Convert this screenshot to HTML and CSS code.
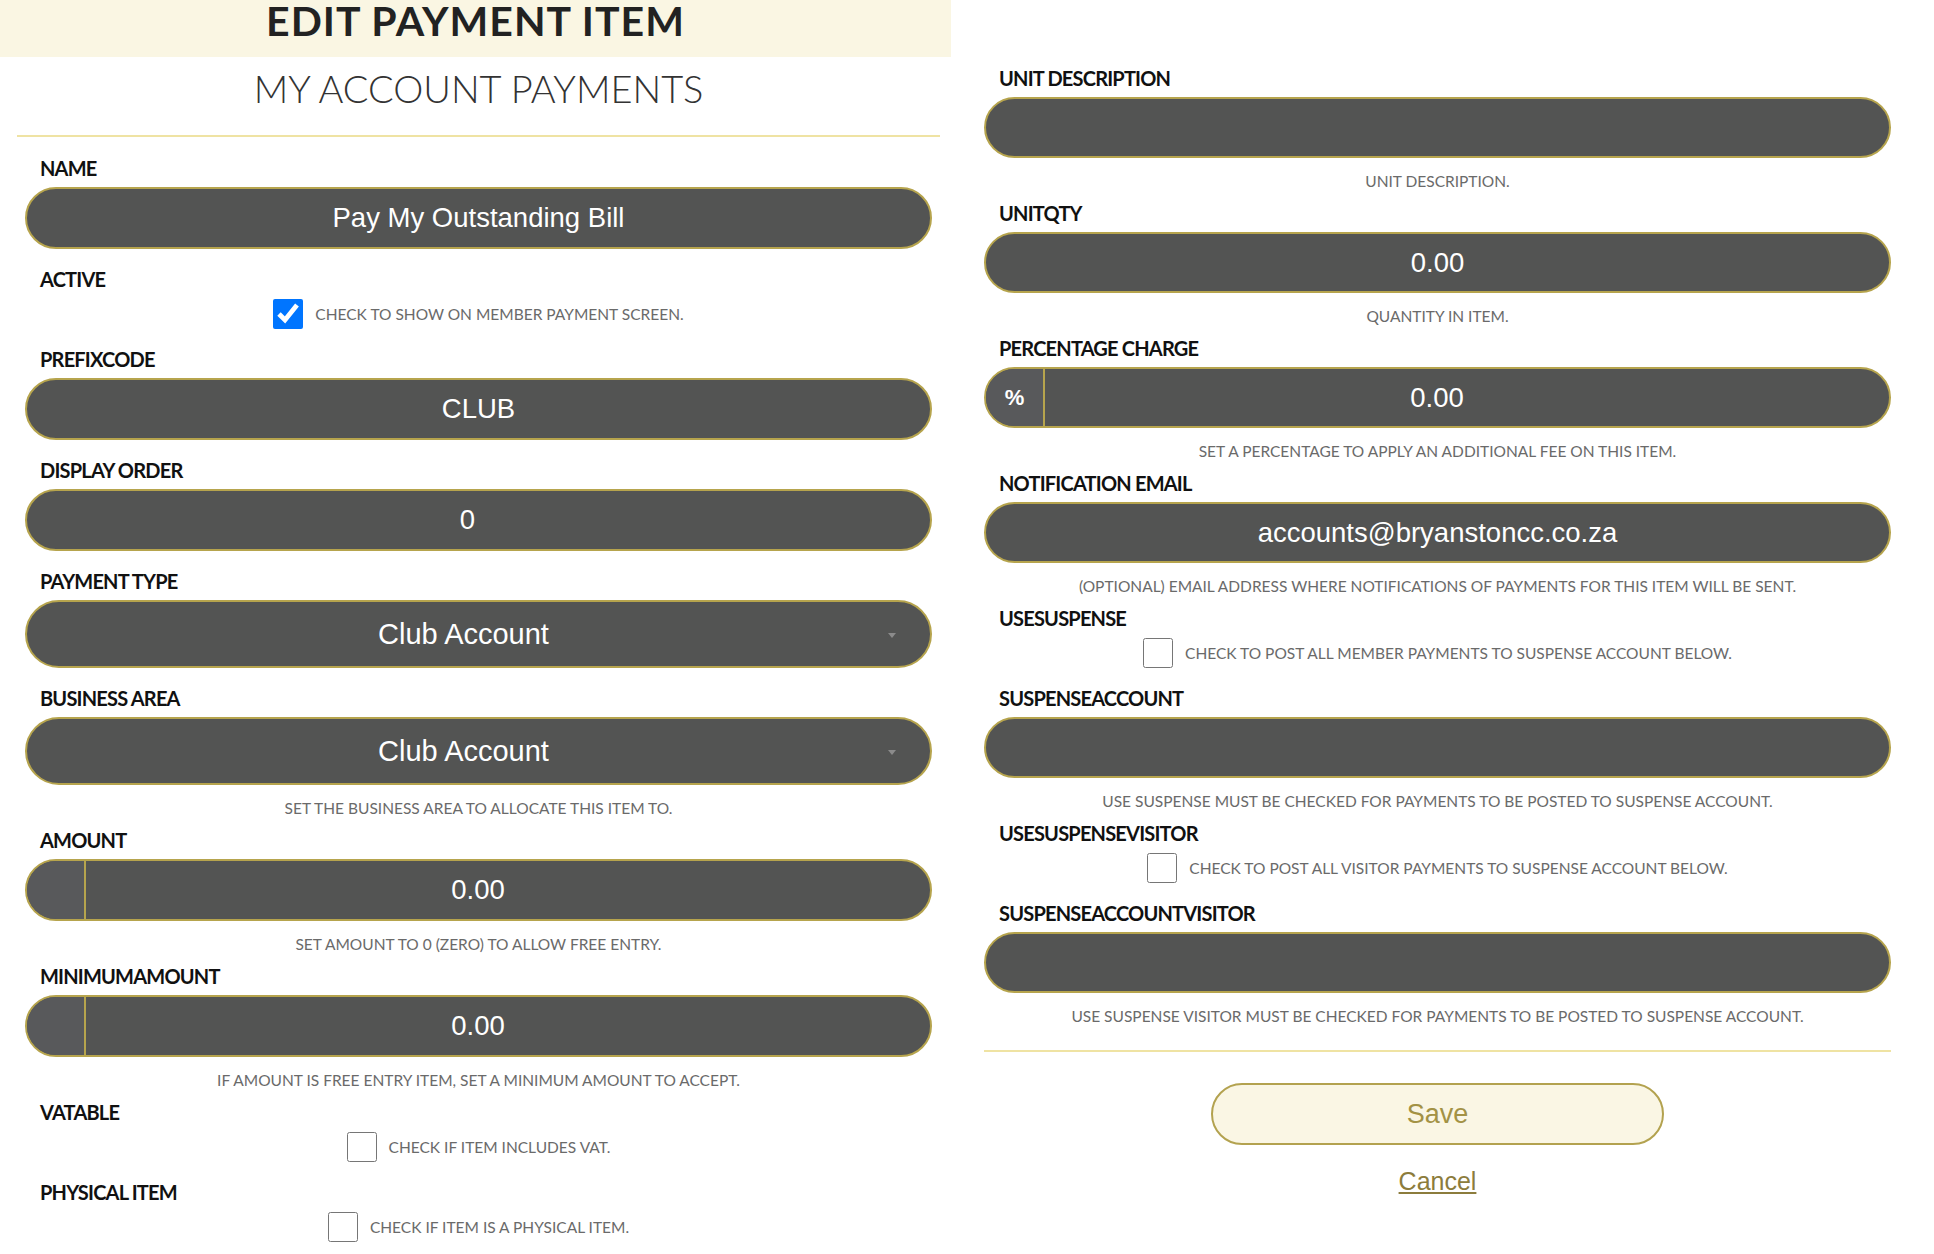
FILE: index.html
```html
<!DOCTYPE html>
<html lang="en">
<head>
<meta charset="utf-8">
<title>Edit Payment Item</title>
<link rel="stylesheet" href="styles.css">
</head>
<body>
<div class="page">
  <section class="col col-left">
    <header class="head"><h1>EDIT PAYMENT ITEM</h1></header>
    <h2 class="sub">MY ACCOUNT PAYMENTS</h2>
    <hr class="rule">
    <div class="form">
      <div class="field">
        <label class="lbl">NAME</label>
        <input class="ctl" type="text" value="Pay My Outstanding Bill">
      </div>
      <div class="field">
        <label class="lbl">ACTIVE</label>
        <div class="check-row"><input type="checkbox" checked><span>CHECK TO SHOW ON MEMBER PAYMENT SCREEN.</span></div>
      </div>
      <div class="field">
        <label class="lbl">PREFIXCODE</label>
        <input class="ctl" type="text" value="CLUB">
      </div>
      <div class="field">
        <label class="lbl">DISPLAY ORDER</label>
        <input class="ctl ctl--num" type="text" value="0">
      </div>
      <div class="field">
        <label class="lbl">PAYMENT TYPE</label>
        <div class="sel-wrap"><select class="ctl sel"><option>Club Account</option></select></div>
      </div>
      <div class="field field--help">
        <label class="lbl">BUSINESS AREA</label>
        <div class="sel-wrap"><select class="ctl sel"><option>Club Account</option></select></div>
        <p class="help">SET THE BUSINESS AREA TO ALLOCATE THIS ITEM TO.</p>
      </div>
      <div class="field field--help">
        <label class="lbl">AMOUNT</label>
        <div class="addon-group"><span class="addon"></span><input type="text" value="0.00"></div>
        <p class="help">SET AMOUNT TO 0 (ZERO) TO ALLOW FREE ENTRY.</p>
      </div>
      <div class="field field--help">
        <label class="lbl">MINIMUMAMOUNT</label>
        <div class="addon-group"><span class="addon"></span><input type="text" value="0.00"></div>
        <p class="help">IF AMOUNT IS FREE ENTRY ITEM, SET A MINIMUM AMOUNT TO ACCEPT.</p>
      </div>
      <div class="field">
        <label class="lbl">VATABLE</label>
        <div class="check-row"><input type="checkbox"><span>CHECK IF ITEM INCLUDES VAT.</span></div>
      </div>
      <div class="field">
        <label class="lbl">PHYSICAL ITEM</label>
        <div class="check-row"><input type="checkbox"><span>CHECK IF ITEM IS A PHYSICAL ITEM.</span></div>
      </div>
    </div>
  </section>

  <section class="col col-right">
    <div class="field field--help">
      <label class="lbl">UNIT DESCRIPTION</label>
      <input class="ctl" type="text" value="">
      <p class="help">UNIT DESCRIPTION.</p>
    </div>
    <div class="field field--help">
      <label class="lbl">UNITQTY</label>
      <input class="ctl" type="text" value="0.00">
      <p class="help">QUANTITY IN ITEM.</p>
    </div>
    <div class="field field--help">
      <label class="lbl">PERCENTAGE CHARGE</label>
      <div class="addon-group"><span class="addon">%</span><input type="text" value="0.00"></div>
      <p class="help">SET A PERCENTAGE TO APPLY AN ADDITIONAL FEE ON THIS ITEM.</p>
    </div>
    <div class="field field--help">
      <label class="lbl">NOTIFICATION EMAIL</label>
      <input class="ctl" type="text" value="accounts@bryanstoncc.co.za">
      <p class="help">(OPTIONAL) EMAIL ADDRESS WHERE NOTIFICATIONS OF PAYMENTS FOR THIS ITEM WILL BE SENT.</p>
    </div>
    <div class="field">
      <label class="lbl">USESUSPENSE</label>
      <div class="check-row"><input type="checkbox"><span>CHECK TO POST ALL MEMBER PAYMENTS TO SUSPENSE ACCOUNT BELOW.</span></div>
    </div>
    <div class="field field--help">
      <label class="lbl">SUSPENSEACCOUNT</label>
      <input class="ctl" type="text" value="">
      <p class="help">USE SUSPENSE MUST BE CHECKED FOR PAYMENTS TO BE POSTED TO SUSPENSE ACCOUNT.</p>
    </div>
    <div class="field">
      <label class="lbl">USESUSPENSEVISITOR</label>
      <div class="check-row"><input type="checkbox"><span>CHECK TO POST ALL VISITOR PAYMENTS TO SUSPENSE ACCOUNT BELOW.</span></div>
    </div>
    <div class="field field--last">
      <label class="lbl">SUSPENSEACCOUNTVISITOR</label>
      <input class="ctl" type="text" value="">
      <p class="help">USE SUSPENSE VISITOR MUST BE CHECKED FOR PAYMENTS TO BE POSTED TO SUSPENSE ACCOUNT.</p>
    </div>
    <hr class="rule rule--right">
    <button class="save" type="button">Save</button>
    <a class="cancel" href="#">Cancel</a>
  </section>
</div>
</body>
</html>
```

FILE: styles.css
```css
* {
  box-sizing: border-box;
}

body {
  margin: 0;
  background: #ffffff;
  font-family: Lato, "Liberation Sans", sans-serif;
  overflow: hidden;
}

.page {
  display: flex;
  width: 1934px;
}

.col-left {
  width: 957px;
  flex: none;
}

.col-right {
  width: 977px;
  flex: none;
  padding: 67px 43px 0 27px;
}

.head {
  width: 951px;
  height: 57px;
  background: #faf6e3;
}

.head h1 {
  margin: 0;
  font: 700 41px/41px Lato, sans-serif;
  letter-spacing: 1px;
  text-align: center;
  color: #222222;
}

.sub {
  margin: 11.7px 0 0;
  font: 300 38px/38px Lato, sans-serif;
  text-align: center;
  color: #333333;
}

.rule {
  margin: 28.3px 17px 0;
  border: 0;
  height: 2px;
  background: #efe3a3;
}

.form {
  padding: 19.7px 25px 0;
}

.field {
  margin-bottom: 19px;
}

.field--help {
  margin-bottom: 14px;
}

.field--last {
  margin-bottom: 0;
}

.lbl {
  display: block;
  padding-left: 15px;
  margin-bottom: 8px;
  font: 700 20px/22px Lato, sans-serif;
  letter-spacing: -0.8px;
  color: #111111;
}

.ctl {
  display: block;
  width: 100%;
  height: 61px;
  margin: 0;
  padding: 0;
  border: 2px solid #b6a44d;
  border-radius: 31px;
  background: #535453;
  color: #ffffff;
  font: 27.5px "Liberation Sans", Arial, sans-serif;
  text-align: center;
  outline: none;
}

.form .ctl {
  height: 62px;
}

.ctl--num {
  padding-right: 22px;
}

.sel-wrap {
  position: relative;
}

.sel-wrap::after {
  content: "";
  position: absolute;
  right: 36px;
  top: 50%;
  margin-top: -1px;
  border-left: 4.5px solid transparent;
  border-right: 4.5px solid transparent;
  border-top: 5px solid #8b8b8b;
}

.form .sel {
  height: 68px;
  border-radius: 34px;
  appearance: none;
  -webkit-appearance: none;
  text-align-last: center;
  padding-right: 30px;
  font-size: 29px;
}

.addon-group {
  display: flex;
  height: 61px;
  border: 2px solid #b6a44d;
  border-radius: 31px;
  overflow: hidden;
  background: #535453;
}

.form .addon-group {
  height: 62px;
}

.addon {
  width: 59px;
  flex: none;
  background: #58595b;
  border-right: 2px solid #b6a44d;
  color: #ffffff;
  font: 700 22px "Liberation Sans", Arial, sans-serif;
  display: flex;
  align-items: center;
  justify-content: center;
}

.addon-group input {
  flex: 1;
  min-width: 0;
  margin: 0;
  border: 0;
  padding: 0 60px 0 0;
  background: transparent;
  color: #ffffff;
  font: 27.5px "Liberation Sans", Arial, sans-serif;
  text-align: center;
  outline: none;
}

.help {
  margin: 16px 0 0;
  font: 400 15.5px/14px Lato, sans-serif;
  color: #6a6a6a;
  text-align: center;
}

.check-row {
  display: flex;
  justify-content: center;
  align-items: center;
  gap: 12px;
  padding-top: 1px;
}

.check-row input {
  width: 30px;
  height: 30px;
  margin: 0;
  flex: none;
}

.check-row span {
  font: 400 15.5px/14px Lato, sans-serif;
  color: #6a6a6a;
}

.rule--right {
  margin: 27px 0 0;
}

.save {
  display: block;
  width: 453px;
  height: 62px;
  margin: 31px auto 0;
  border: 2px solid #b3a24f;
  border-radius: 31px;
  background: #faf6e4;
  color: #a39245;
  font: 27px "Liberation Sans", Arial, sans-serif;
  cursor: pointer;
}

.cancel {
  display: block;
  width: fit-content;
  margin: 22px auto 0;
  font: 25px/28px "Liberation Sans", Arial, sans-serif;
  color: #8c7c3c;
  text-decoration: underline;
}
```
